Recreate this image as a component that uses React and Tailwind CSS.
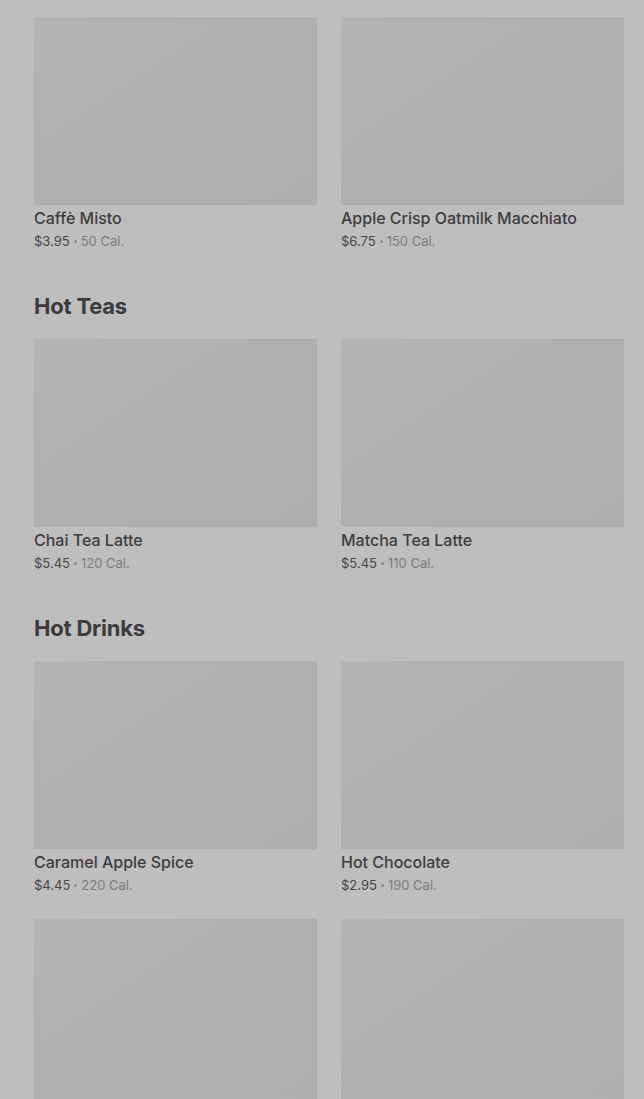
import React from "react";

const sections = [
    {
        title: null,
        items: [
            { name: "Caffè Misto", price: "$3.95", cal: "50 Cal." },
            { name: "Apple Crisp Oatmilk Macchiato", price: "$6.75", cal: "150 Cal." },
        ],
    },
    {
        title: "Hot Teas",
        items: [
            { name: "Chai Tea Latte", price: "$5.45", cal: "120 Cal." },
            { name: "Matcha Tea Latte", price: "$5.45", cal: "110 Cal." },
        ],
    },
    {
        title: "Hot Drinks",
        items: [
            { name: "Caramel Apple Spice", price: "$4.45", cal: "220 Cal." },
            { name: "Hot Chocolate", price: "$2.95", cal: "190 Cal." },
            { name: "Steamed Apple Juice", price: "$3.45", cal: "180 Cal." },
            { name: "White Hot Chocolate", price: "$3.45", cal: "320 Cal." },
        ],
    },
];

const Card = ({ item }) => (
    <div className="flex flex-col h-[234px]">
        <div className="h-[188px] bg-gradient-to-br from-[#b4b4b4] via-[#afafaf] to-[#aeaeae]" />
        <div className="mt-[1px] text-[16px] leading-[24px] font-medium text-[#3d3d3d] truncate">
            {item.name}
        </div>
        <div className="mt-[1px] flex items-center text-[13px] leading-[20px] text-[#7c7c7c]">
            <span className="text-[#474747]">{item.price}</span>
            <span className="mx-[4px] w-[3px] h-[3px] rounded-full bg-[#8a8a8a]" />
            <span>{item.cal}</span>
        </div>
    </div>
);

export default function App() {
    return (
        <div
            className="h-[1099px] bg-[#bebebe] pl-[34px] pr-[20px] pt-[17px] overflow-hidden"
            style={{ fontFamily: "Inter, 'Noto Sans', sans-serif" }}
        >
            {sections.map((section, i) => (
                <div key={i}>
                    {section.title && (
                        <h2 className="mt-[41px] mb-[19px] text-[22px] leading-[28px] font-bold text-[#3b3b3b] tracking-[-0.2px]">
                            {section.title}
                        </h2>
                    )}
                    <div className="grid grid-cols-[283px_283px] gap-x-[24px] gap-y-[24px]">
                        {section.items.map((item) => (
                            <Card key={item.name} item={item} />
                        ))}
                    </div>
                </div>
            ))}
        </div>
    );
}
